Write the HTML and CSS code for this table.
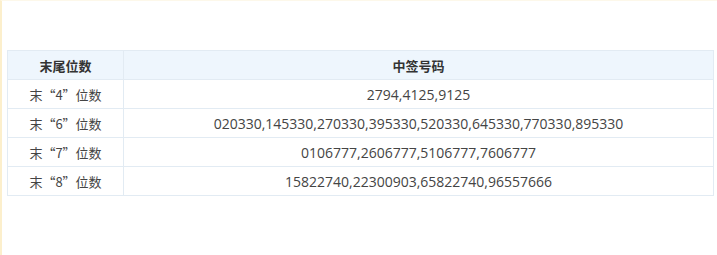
FILE: index.html
```html
<!DOCTYPE html>
<html lang="zh-CN">
<head>
<meta charset="utf-8">
<link rel="stylesheet" href="styles.css">
</head>
<body>
<div class="page">
  <table class="result">
    <thead>
      <tr><th class="c1">末尾位数</th><th>中签号码</th></tr>
    </thead>
    <tbody>
      <tr><td>末“4”位数</td><td class="num">2794,4125,9125</td></tr>
      <tr><td>末“6”位数</td><td class="num">020330,145330,270330,395330,520330,645330,770330,895330</td></tr>
      <tr><td>末“7”位数</td><td class="num">0106777,2606777,5106777,7606777</td></tr>
      <tr><td>末“8”位数</td><td class="num">15822740,22300903,65822740,96557666</td></tr>
    </tbody>
  </table>
</div>
</body>
</html>
```
FILE: styles.css
```css
html, body {
  margin: 0;
  padding: 0;
  background: #fff;
}
.page {
  width: 717px;
  height: 255px;
  box-sizing: border-box;
  border-left: 2px solid #fcefcc;
  border-top: 1px solid #fdf8ea;
  padding: 49px 3px 0 5px;
  font-family: "Noto Sans CJK SC", "Noto Sans", sans-serif;
}
.result {
  width: 707px;
  border-collapse: collapse;
  font-size: 13px;
  color: #444;
}
.result th, .result td {
  border: 1px solid #e2ebf3;
  text-align: center;
  padding: 0;
}
.result th {
  height: 28px;
  background: #eef6fd;
  font-weight: bold;
  color: #333;
}
.result td {
  height: 28px;
}
.result .num {
  font-family: "Open Sans", "Noto Sans CJK SC", sans-serif;
  font-size: 14px;
  color: #444;
}
.result .c1 {
  width: 115px;
}
```
